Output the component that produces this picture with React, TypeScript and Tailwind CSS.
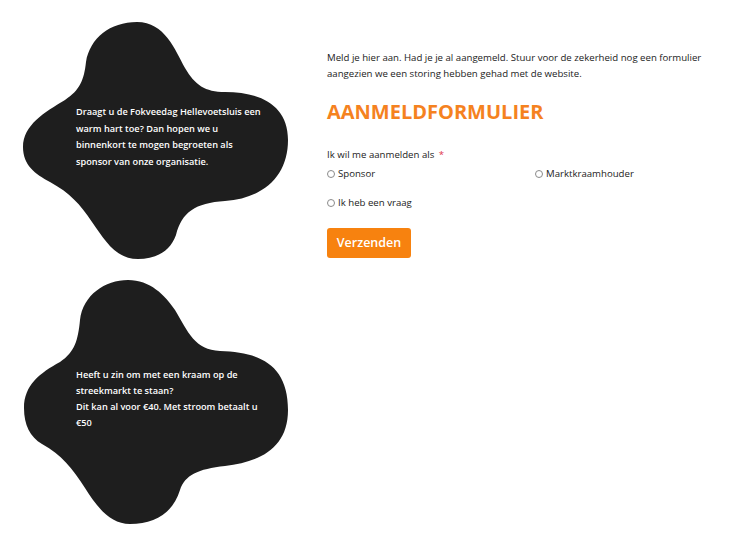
import React from "react";

function Radio({ label }: { label: string }) {
  return (
    <label className="flex items-center gap-[3px] h-[16px]">
      <span className="w-[8px] h-[8px] rounded-full border border-[#8a8a8a] bg-white shrink-0" />
      <span>{label}</span>
    </label>
  );
}

export default function App() {
  const font = { fontFamily: '"Open Sans", "Noto Sans", sans-serif' };
  return (
    <div className="w-[732px] h-[549px] bg-white overflow-hidden flex" style={font}>
      <div className="w-[300px] shrink-0 flex flex-col">
        <div className="relative h-[270px]">
          <svg className="absolute inset-0" width="300" height="270" viewBox="0 0 300 270">
            <path
              fill="#1e1e1e"
              d="M137,22 C165,22 175,50 185,68 C195,85 205,92 225,92 C260,92 288,105 288,140 C288,175 265,198 225,201 C195,203 182,212 176,235 C170,252 155,259 138,259 C115,259 105,240 92,222 C80,204 70,193 50,182 C35,174 23,165 23,147 C23,125 45,112 65,100 C80,90 84,80 86,62 C90,38 110,22 137,22 Z"
            />
          </svg>
          <p className="relative pl-[76px] pt-[104px] text-[9.2px] leading-[16.7px] font-semibold text-white whitespace-nowrap">
            Draagt u de Fokveedag Hellevoetsluis een
            <br />
            warm hart toe? Dan hopen we u
            <br />
            binnenkort te mogen begroeten als
            <br />
            sponsor van onze organisatie.
          </p>
        </div>
        <div className="relative h-[279px]">
          <svg className="absolute inset-0" width="300" height="279" viewBox="0 0 300 279">
            <path
              fill="#1e1e1e"
              d="M128,10 C150,10 165,25 175,40 C188,62 195,80 220,81 C260,82 288,95 288,140 C288,178 260,192 225,196 C198,199 185,205 180,220 C173,243 155,254 130,254 C110,254 97,237 85,218 C72,198 62,185 42,174 C30,167 24,155 24,138 C24,115 40,103 60,92 C75,82 78,70 80,50 C83,25 105,10 128,10 Z"
            />
          </svg>
          <p className="relative pl-[76px] pt-[97px] text-[9.2px] leading-[16px] font-semibold text-white whitespace-nowrap">
            Heeft u zin om met een kraam op de
            <br />
            streekmarkt te staan?
            <br />
            Dit kan al voor €40. Met stroom betaalt u
            <br />
            €50
          </p>
        </div>
      </div>
      <div className="pl-[27px] pt-[50px] flex flex-col text-[9.65px] text-[#222] whitespace-nowrap">
        <p className="leading-[16px]">
          Meld je hier aan. Had je je al aangemeld. Stuur voor de zekerheid nog een formulier
          <br />
          aangezien we een storing hebben gehad met de website.
        </p>
        <h2 className="mt-[18px] text-[20px] leading-[24px] font-bold text-[#f5821f]">AANMELDFORMULIER</h2>
        <div className="mt-[23px] leading-[16px]">
          Ik wil me aanmelden als <span className="text-[#e0344a] ml-[2px]">*</span>
        </div>
        <div className="mt-[3px] grid grid-cols-[208px_200px] gap-y-[13px]">
          <Radio label="Sponsor" />
          <Radio label="Marktkraamhouder" />
          <Radio label="Ik heb een vraag" />
        </div>
        <div className="mt-[17px]">
          <button className="w-[84px] h-[30px] rounded-[3px] bg-[#f7820f] text-white text-[12.5px] font-semibold">
            Verzenden
          </button>
        </div>
      </div>
    </div>
  );
}
